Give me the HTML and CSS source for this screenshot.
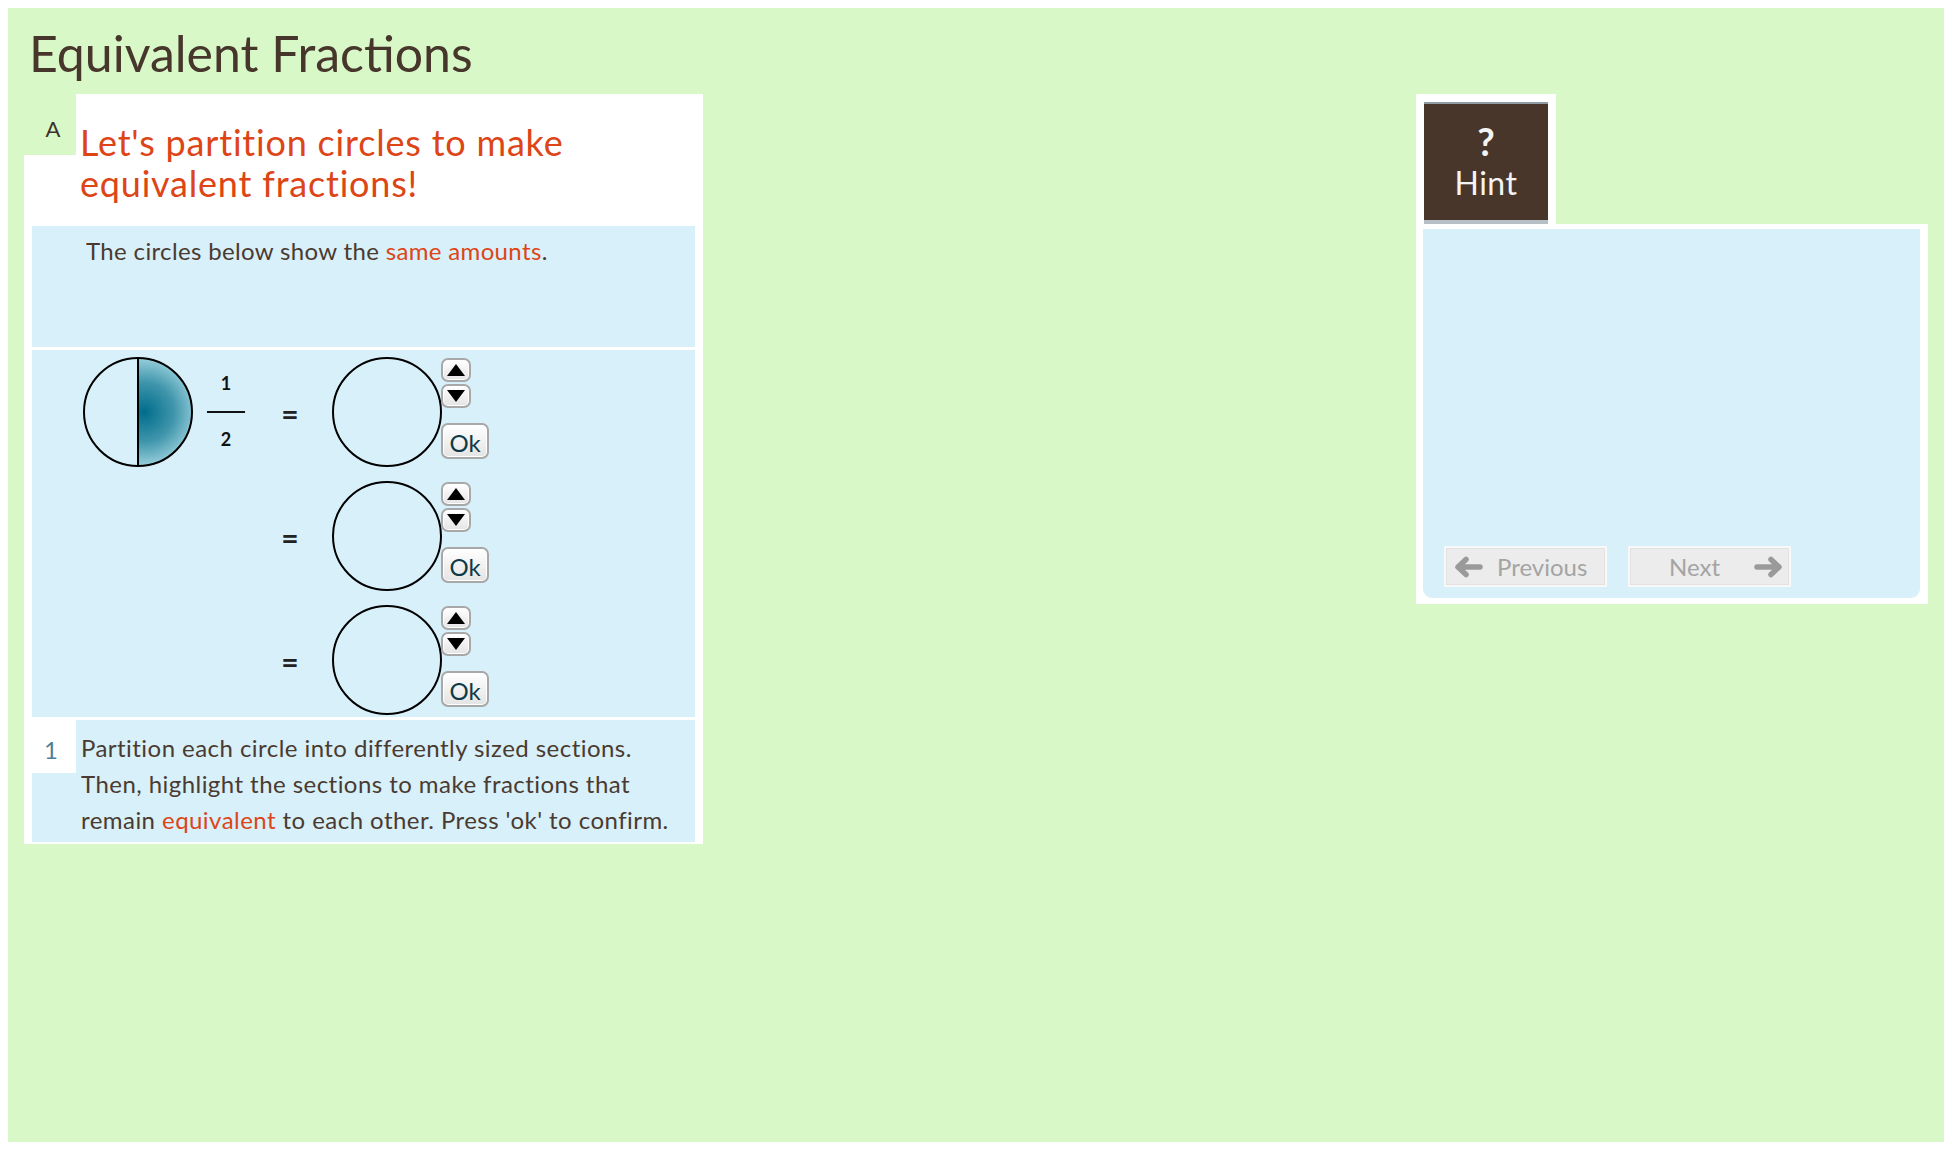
FILE: index.html
```html
<!DOCTYPE html>
<html lang="en">
<head>
<meta charset="utf-8">
<title>Equivalent Fractions</title>
<link rel="stylesheet" href="styles.css">
</head>
<body>
<div class="app">
  <h1 class="title">Equivalent Fractions</h1>
  <div class="stage">
    <section class="activity">
      <header class="act-head">
        <div class="act-label">A</div>
        <h2 class="act-title">Let's partition circles to make<br>equivalent fractions!</h2>
      </header>
      <div class="intro">The circles below show the <span class="hl">same amounts</span>.</div>
      <div class="workspace">
        <div class="frow">
          <svg class="circle" width="110" height="110" viewBox="0 0 110 110">
            <defs>
              <radialGradient id="half" gradientUnits="userSpaceOnUse" cx="61" cy="55" r="54">
                <stop offset="0" stop-color="#006d8b"/>
                <stop offset="0.55" stop-color="#3f95ab"/>
                <stop offset="1" stop-color="#98cfdc"/>
              </radialGradient>
            </defs>
            <path d="M55 1 A54 54 0 0 1 55 109 Z" fill="url(#half)"/>
            <circle cx="55" cy="55" r="54" fill="none" stroke="#000" stroke-width="2"/>
            <line x1="55" y1="1" x2="55" y2="109" stroke="#000" stroke-width="2"/>
          </svg>
          <div class="frac"><span class="num">1</span><span class="bar"></span><span class="num den">2</span></div>
          <div class="eq">=</div>
          <svg class="circle empty" width="110" height="110" viewBox="0 0 110 110"><circle cx="55" cy="55" r="54" fill="none" stroke="#000" stroke-width="2"/></svg>
          <div class="controls">
            <button class="spin"><svg width="20" height="14" viewBox="0 0 20 14"><polygon points="10,1 19,13 1,13" fill="#000"/></svg></button>
            <button class="spin down"><svg width="20" height="14" viewBox="0 0 20 14"><polygon points="1,1 19,1 10,13" fill="#000"/></svg></button>
            <button class="ok">Ok</button>
          </div>
        </div>
        <div class="frow">
          <div class="spacer"></div>
          <div class="eq">=</div>
          <svg class="circle empty" width="110" height="110" viewBox="0 0 110 110"><circle cx="55" cy="55" r="54" fill="none" stroke="#000" stroke-width="2"/></svg>
          <div class="controls">
            <button class="spin"><svg width="20" height="14" viewBox="0 0 20 14"><polygon points="10,1 19,13 1,13" fill="#000"/></svg></button>
            <button class="spin down"><svg width="20" height="14" viewBox="0 0 20 14"><polygon points="1,1 19,1 10,13" fill="#000"/></svg></button>
            <button class="ok">Ok</button>
          </div>
        </div>
        <div class="frow">
          <div class="spacer"></div>
          <div class="eq">=</div>
          <svg class="circle empty" width="110" height="110" viewBox="0 0 110 110"><circle cx="55" cy="55" r="54" fill="none" stroke="#000" stroke-width="2"/></svg>
          <div class="controls">
            <button class="spin"><svg width="20" height="14" viewBox="0 0 20 14"><polygon points="10,1 19,13 1,13" fill="#000"/></svg></button>
            <button class="spin down"><svg width="20" height="14" viewBox="0 0 20 14"><polygon points="1,1 19,1 10,13" fill="#000"/></svg></button>
            <button class="ok">Ok</button>
          </div>
        </div>
      </div>
      <div class="step">
        <div class="step-num">1</div>
        <p class="step-text">Partition each circle into differently sized sections.<br>Then, highlight the sections to make fractions that<br>remain <span class="hl">equivalent</span> to each other. Press 'ok' to confirm.</p>
      </div>
    </section>
    <aside class="hint-panel">
      <div class="hint-tab">
        <button class="hint-btn"><span class="q">?</span><span class="hint-label">Hint</span></button>
      </div>
      <div class="hint-body">
        <div class="hint-inner">
          <button class="nav-btn prev">
            <svg class="arrow" width="30" height="22" viewBox="0 0 30 22"><path d="M27 11 H6 M13 3.5 L5 11 L13 18.5" fill="none" stroke="#9a9a9a" stroke-width="5.5" stroke-linecap="round" stroke-linejoin="round"/></svg>
            <span class="nav-text">Previous</span>
          </button>
          <button class="nav-btn next">
            <span class="nav-text">Next</span>
            <svg class="arrow" width="30" height="22" viewBox="0 0 30 22"><path d="M3 11 H24 M17 3.5 L25 11 L17 18.5" fill="none" stroke="#9a9a9a" stroke-width="5.5" stroke-linecap="round" stroke-linejoin="round"/></svg>
          </button>
        </div>
      </div>
    </aside>
  </div>
</div>
</body>
</html>
```
FILE: styles.css
```css
html, body {
  background: #ffffff;
}
body {
  margin: 8px;
}
.app {
  background: #d8f8c8;
  height: calc(100vh - 16px);
  font-family: Lato, "Open Sans", sans-serif;
  color: #4a3a30;
  box-sizing: border-box;
}
.title {
  margin: 0;
  height: 86px;
  box-sizing: border-box;
  padding: 17px 0 0 21px;
  font-size: 50px;
  line-height: 56px;
  font-weight: 400;
  color: #46362b;
}
.stage {
  display: flex;
  justify-content: space-between;
  align-items: flex-start;
  padding: 0 16px;
}
.activity {
  width: 679px;
  background: #ffffff;
  padding: 0 8px 2px;
  box-sizing: border-box;
}
.act-head {
  display: flex;
  margin: 0 -8px;
  height: 132px;
}
.act-label {
  flex: none;
  width: 52px;
  height: 61px;
  box-sizing: border-box;
  background: #d8f8c8;
  padding: 23px 0 0 6px;
  text-align: center;
  font-size: 22px;
  line-height: 24px;
  color: #3e3028;
}
.act-title {
  margin: 0;
  padding: 28px 0 0 4px;
  font-size: 36px;
  line-height: 41px;
  letter-spacing: 0.8px;
  font-weight: 400;
  color: #dd4516;
}
.hl {
  color: #dd4516;
}
.intro {
  background: #d8f0f9;
  height: 121px;
  box-sizing: border-box;
  padding: 10px 0 0 54px;
  font-size: 24px;
  line-height: 30px;
  letter-spacing: 0.35px;
}
.workspace {
  background: #d8f0f9;
  margin-top: 3px;
  height: 367px;
  box-sizing: border-box;
  padding-top: 7px;
}
.frow {
  display: flex;
  align-items: flex-start;
  height: 124px;
  padding-left: 51px;
}
.circle {
  flex: none;
  display: block;
}
.spacer {
  width: 162px;
  flex: none;
}
.frac {
  flex: none;
  width: 38px;
  height: 110px;
  margin-left: 14px;
  box-sizing: border-box;
  padding-top: 16px;
  display: flex;
  flex-direction: column;
  align-items: center;
  color: #111;
}
.num {
  font-size: 18px;
  line-height: 20px;
  font-weight: 700;
}
.bar {
  display: block;
  width: 38px;
  height: 2px;
  background: #111;
  margin: 18px 0 16px;
}
.eq {
  flex: none;
  width: 14px;
  height: 110px;
  margin-left: 38px;
  display: flex;
  align-items: center;
  justify-content: center;
  padding-top: 2px;
  box-sizing: border-box;
  font-size: 30px;
  font-weight: 700;
  color: #222;
}
.circle.empty {
  margin-left: 35px;
}
.controls {
  flex: none;
  margin-left: -1px;
  width: 48px;
  display: flex;
  flex-direction: column;
  align-items: flex-start;
}
.spin, .ok {
  box-sizing: border-box;
  border: 2px solid #a8a8a8;
  border-radius: 7px;
  background: linear-gradient(#ffffff, #e4e4e4);
  box-shadow: inset 0 0 0 1px #ffffff;
  padding: 0;
  display: flex;
  align-items: center;
  justify-content: center;
}
.spin {
  width: 30px;
  height: 24px;
  margin-top: 1px;
}
.spin.down {
  margin-top: 2px;
}
.ok {
  width: 48px;
  height: 36px;
  margin-top: 15px;
  font-family: Lato, "Open Sans", sans-serif;
  font-size: 24px;
  color: #0d3a48;
  padding-top: 2px;
}
.step {
  display: flex;
  margin-top: 3px;
  background: #d8f0f9;
  height: 122px;
}
.step-num {
  flex: none;
  margin-left: -8px;
  width: 52px;
  height: 53px;
  box-sizing: border-box;
  background: #ffffff;
  padding: 16px 0 0 2px;
  text-align: center;
  font-size: 24px;
  line-height: 28px;
  color: #4f7e98;
}
.step-text {
  margin: 0;
  padding: 10px 0 0 5px;
  font-size: 24px;
  line-height: 36px;
  letter-spacing: 0.45px;
}
.hint-panel {
  width: 512px;
}
.hint-tab {
  width: 140px;
  background: #ffffff;
  padding: 8px 8px 0;
  box-sizing: border-box;
}
.hint-btn {
  display: flex;
  flex-direction: column;
  align-items: center;
  width: 124px;
  height: 122px;
  box-sizing: border-box;
  margin: 0;
  padding: 17px 0 0;
  border: 0;
  border-top: 2px solid #8e9ca3;
  border-bottom: 4px solid #b5bfc5;
  background: #48362b;
  color: #f4f4f4;
  font-family: Lato, "Open Sans", sans-serif;
}
.q {
  font-size: 38px;
  line-height: 40px;
  font-weight: 700;
}
.hint-label {
  margin-top: 5px;
  font-size: 32px;
  line-height: 34px;
  letter-spacing: 0.5px;
}
.hint-body {
  background: #ffffff;
  height: 380px;
  box-sizing: border-box;
  padding: 5px 8px 6px 7px;
}
.hint-inner {
  height: 100%;
  box-sizing: border-box;
  background: #d8f0f9;
  border-radius: 0 0 9px 9px;
  display: flex;
  align-items: flex-end;
  gap: 21px;
  padding: 0 0 11px 21px;
}
.nav-btn {
  width: 163px;
  height: 41px;
  box-sizing: border-box;
  margin: 0;
  border: 2px solid #f8f8f8;
  box-shadow: inset 0 0 0 1px #e2e2e2;
  background: #ececec;
  display: flex;
  align-items: center;
  font-family: Lato, "Open Sans", sans-serif;
  font-size: 24px;
  color: #a4a4a4;
}
.nav-btn.prev {
  padding: 0 0 0 7px;
}
.nav-btn.prev .nav-text {
  margin-left: 14px;
}
.nav-btn.next {
  padding: 0 0 0 39px;
}
.nav-btn.next .arrow {
  margin-left: 34px;
}
.arrow {
  flex: none;
  display: block;
}
```
